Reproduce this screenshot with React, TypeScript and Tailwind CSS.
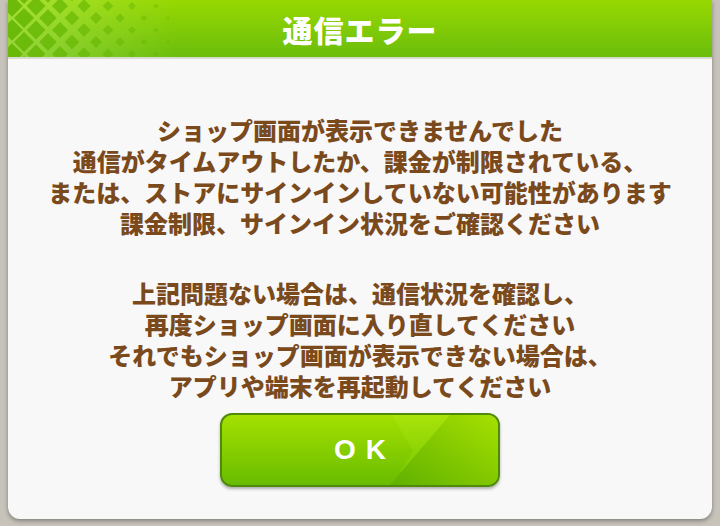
import React from "react";

const font = { fontFamily: '"Noto Sans CJK JP", "Noto Sans", sans-serif' };

function Diamonds() {
  const items: React.ReactNode[] = [];
  const step = 24;
  for (let row = -1; row < 6; row++) {
    for (let col = 0; col < 9; col++) {
      const cx = col * step + (row % 2 === 0 ? 0 : step / 2) + 4;
      const cy = row * 12 + 6;
      const t = cx / 150;
      const s = Math.max(0, 11 - t * 8.5);
      if (s <= 1) continue;
      items.push(
        <polygon
          key={`${row}-${col}`}
          points={`${cx},${cy - s} ${cx + s},${cy} ${cx},${cy + s} ${cx - s},${cy}`}
          fill="#62b400"
          opacity={Math.max(0.25, 0.85 - t * 0.5)}
        />
      );
    }
  }
  return (
    <svg className="absolute left-0 top-0" width="170" height="57" viewBox="0 0 170 57">
      <rect x="0" y="0" width="170" height="57" fill="url(#hfade)" />
      <defs>
        <linearGradient id="hfade" x1="0" y1="0" x2="1" y2="0">
          <stop offset="0" stopColor="#b4e860" stopOpacity="0.55" />
          <stop offset="1" stopColor="#b4e860" stopOpacity="0" />
        </linearGradient>
      </defs>
      {items}
    </svg>
  );
}

export default function App() {
  return (
    <div className="w-[720px] h-[526px] bg-[#c7c3bb] overflow-hidden" style={font}>
      <div className="ml-[8px] w-[704px] h-[519px] rounded-b-[12px] bg-[#f8f8f8] shadow-[0_2px_4px_rgba(0,0,0,0.35)] overflow-hidden flex flex-col">
        <div className="relative h-[59px] bg-gradient-to-b from-[#97d800] to-[#6abd0c] border-b-2 border-[#d8dcd0] flex items-center justify-center">
          <Diamonds />
          <span className="relative text-white text-[30px] font-black leading-none tracking-[1px]">通信エラー</span>
        </div>
        <div className="flex flex-col items-center pt-[55px] text-[#7a4a1c] text-[24px] font-black leading-[31px] text-center">
          <p className="h-[31px]">ショップ画面が表示できませんでした</p>
          <p className="h-[31px]">通信がタイムアウトしたか、課金が制限されている、</p>
          <p className="h-[31px]">または、ストアにサインインしていない可能性があります</p>
          <p className="h-[31px]">課金制限、サインイン状況をご確認ください</p>
          <p className="h-[31px] mt-[39px]">上記問題ない場合は、通信状況を確認し、</p>
          <p className="h-[31px]">再度ショップ画面に入り直してください</p>
          <p className="h-[31px]">それでもショップ画面が表示できない場合は、</p>
          <p className="h-[31px]">アプリや端末を再起動してください</p>
          <div className="relative mt-[12px] w-[280px] h-[74px] rounded-[12px] border-2 border-[#4f8a0a] bg-gradient-to-b from-[#a4e000] to-[#68bc00] shadow-[0_2px_3px_rgba(0,0,0,0.3)] overflow-hidden flex items-center justify-center">
            <svg className="absolute inset-0" width="276" height="70" viewBox="0 0 276 70">
              <defs>
                <linearGradient id="rg" x1="0" y1="1" x2="1" y2="0">
                  <stop offset="0" stopColor="#5fb000" />
                  <stop offset="1" stopColor="#a6e000" />
                </linearGradient>
                <linearGradient id="cg" x1="0" y1="0" x2="0" y2="1">
                  <stop offset="0" stopColor="#a8e40a" />
                  <stop offset="1" stopColor="#74c400" />
                </linearGradient>
              </defs>
              <polygon points="170,0 228,0 168,70 170,70 191,36" fill="url(#cg)" />
              <polygon points="228,0 276,0 276,70 168,70" fill="url(#rg)" />
            </svg>
            <span className="relative text-white text-[28px] font-black leading-none tracking-[10px] pl-[10px]" style={{ fontFamily: '"Liberation Sans", Arial, sans-serif' }}>
              OK
            </span>
          </div>
        </div>
      </div>
    </div>
  );
}
